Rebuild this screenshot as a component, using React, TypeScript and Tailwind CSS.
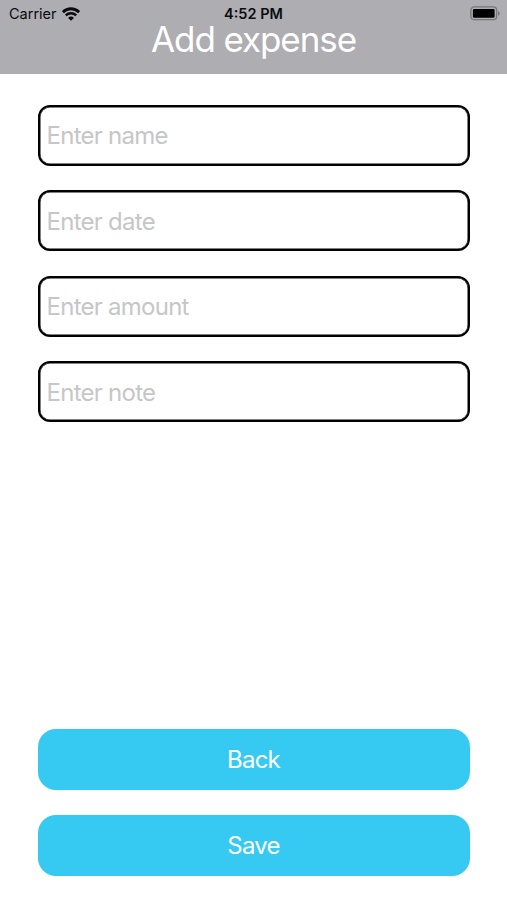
import { useState } from 'react'

const fields = [
  { key: 'name', placeholder: 'Enter name' },
  { key: 'date', placeholder: 'Enter date' },
  { key: 'amount', placeholder: 'Enter amount' },
  { key: 'note', placeholder: 'Enter note' },
] as const

type FieldKey = (typeof fields)[number]['key']

const emptyExpense: Record<FieldKey, string> = { name: '', date: '', amount: '', note: '' }

function WifiIcon() {
  return (
    <svg viewBox="0 0 18 14" className="h-[14px] w-[18px]" fill="none" stroke="#0c0c0e">
      <path d="M0.9 5.1a11.6 11.6 0 0 1 16.2 0" strokeWidth="2.9" />
      <path d="M3.8 8.4a7.4 7.4 0 0 1 10.4 0" strokeWidth="2.5" />
      <path d="M9 13.8 6 10.9a4.4 4.4 0 0 1 6 0Z" fill="#0c0c0e" stroke="none" />
    </svg>
  )
}

function BatteryIcon() {
  return (
    <svg viewBox="0 0 31 15" className="h-[15px] w-[31px]">
      <rect x="0.9" y="0.9" width="25.7" height="12.8" rx="3.2" fill="none" stroke="#77777b" strokeWidth="1.3" />
      <rect x="2.9" y="2.9" width="21.7" height="8.8" rx="1.2" fill="#000" />
      <path d="M28 5v4.600c1-.4 1.700-1.300 1.700-2.300S29 5.400 28 5Z" fill="#77777b" />
    </svg>
  )
}

function StatusBar() {
  return (
    <div className="grid h-[27px] grid-cols-3 items-center text-[14.5px] leading-none text-[#0c0c0e]">
      <div className="flex items-center gap-[5px] pl-[9px]">
        <span className="pt-px">Carrier</span>
        <WifiIcon />
      </div>
      <span className="pt-[2px] text-center font-semibold">4:52 PM</span>
      <div className="flex justify-end pr-[6px]">
        <BatteryIcon />
      </div>
    </div>
  )
}

function ActionButton({ label }: { label: string }) {
  return (
    <button
      type="button"
      className="h-[61px] w-full rounded-[18px] bg-[#36c9f2] pt-px text-center text-[24px] tracking-[-0.8px] text-white"
    >
      {label}
    </button>
  )
}

export default function App() {
  const [expense, setExpense] = useState(emptyExpense)

  return (
    <div className="flex h-[900px] w-[507px] flex-col bg-white font-['Inter',sans-serif]">
      <header className="h-[74px] bg-[#aeadb2]">
        <StatusBar />
        <h1 className="-mt-[3px] text-center text-[35px] leading-[30px] tracking-[-1.1px] text-white">
          Add expense
        </h1>
      </header>

      <main className="flex flex-1 flex-col justify-between px-[37.5px] pt-[30.5px] pb-[24.5px]">
        <div className="flex flex-col gap-[24.5px]">
          {fields.map((f) => (
            <input
              key={f.key}
              value={expense[f.key]}
              onChange={(e) => setExpense((v) => ({ ...v, [f.key]: e.target.value }))}
              placeholder={f.placeholder}
              className="h-[61px] w-full rounded-[12px] border-2 border-black px-[7px] pt-px text-[24px] tracking-[-0.74px] text-black shadow-[inset_0_0_0_0.5px_#000] placeholder:text-[#c6c6c8]"
            />
          ))}
        </div>
        <div className="flex flex-col gap-[24.5px]">
          <ActionButton label="Back" />
          <ActionButton label="Save" />
        </div>
      </main>
    </div>
  )
}
